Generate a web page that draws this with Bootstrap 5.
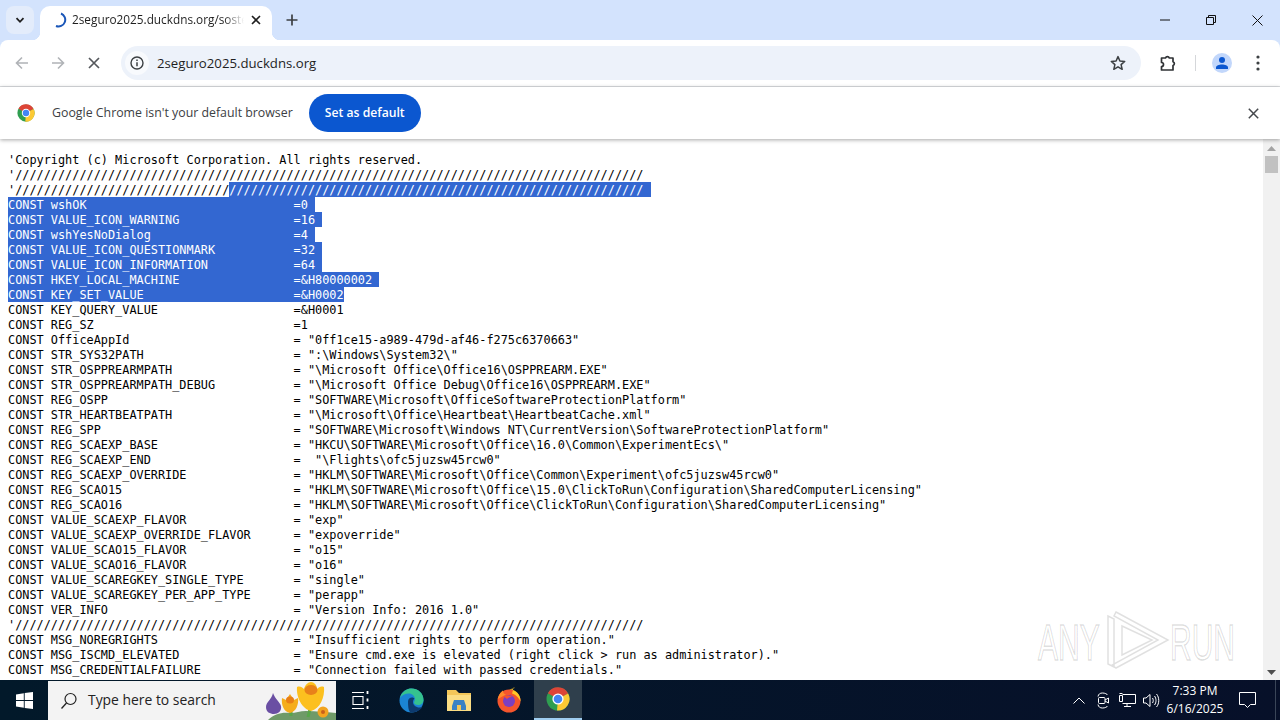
<!DOCTYPE html>
<html lang="en">

<head>
    <meta charset="utf-8" />
    <meta name="viewport" content="width=device-width, initial-scale=1" />
    <title>2seguro2025.duckdns.org</title>

    <link rel="stylesheet" href="https://cdn.jsdelivr.net/npm/bootstrap@5.3.2/dist/css/bootstrap.min.css">
    <style>
        html, body {
            height: 720px;
            overflow: hidden;
        }

        body {
            font-family: "Open Sans", sans-serif;
            background-color: #fff;
        }

        .win-shell {
            width: 1280px;
            height: 720px;
        }

        /* tab strip */
        .tab-strip {
            height: 40px;
            flex: none;
            background-color: #d3e3fd;
            padding-left: 6px;
        }

        .tab-list-btn {
            width: 28px;
            height: 28px;
            margin-top: 6px;
            background-color: #e3ecfb;
            border-radius: 8px;
        }

        .page-tab {
            position: relative;
            width: 232px;
            height: 34px;
            margin-top: 6px;
            margin-left: 6px;
            background-color: #fff;
            border-radius: 10px 10px 0 0;
            padding-left: 13px;
            padding-bottom: 6px;
        }

        .page-tab::before,
        .page-tab::after {
            content: "";
            position: absolute;
            bottom: 0;
            width: 8px;
            height: 8px;
        }

        .page-tab::before {
            left: -8px;
            background: radial-gradient(circle at 0 0, #d3e3fd 8px, #fff 8.5px);
        }

        .page-tab::after {
            right: -8px;
            background: radial-gradient(circle at 100% 0, #d3e3fd 8px, #fff 8.5px);
        }

        .tab-title {
            width: 176px;
            margin-left: 5px;
            font-size: 11.8px;
            color: #1f1f1f;
            white-space: nowrap;
            overflow: hidden;
            -webkit-mask-image: linear-gradient(to right, #000 152px, transparent 172px);
            mask-image: linear-gradient(to right, #000 152px, transparent 172px);
        }

        .tab-close {
            width: 16px;
            margin-left: 0;
        }

        .tab-new {
            width: 28px;
            height: 28px;
            margin-top: 6px;
            margin-left: 6px;
        }

        .win-btn {
            width: 46px;
            height: 40px;
        }

        /* toolbar */
        .tool-bar {
            height: 47px;
            padding-left: 4px;
            padding-right: 3px;
            background-color: #fff;
            border-bottom: 1px solid #dcdee1;
            border-radius: 8px 8px 0 0;
        }

        .tool-strip-back {
            flex: none;
            background-color: #d3e3fd;
        }

        .tool-btn {
            width: 36px;
            height: 36px;
            flex: none;
        }

        .omni-box {
            height: 34px;
            width: 1020px;
            flex: none;
            margin-left: 9px;
            margin-right: 9px;
            background-color: #edf2fa;
            border-radius: 17px;
            padding-left: 4px;
            padding-right: 15px;
        }

        .omni-info {
            width: 24px;
            height: 24px;
            background-color: #f8fafd;
            border-radius: 50%;
        }

        .omni-url {
            margin-left: 8px;
            padding-top: 1px;
            font-size: 13.2px;
            color: #1f1f1f;
        }

        .tool-sep {
            width: 1px;
            height: 16px;
            margin: 0 8px 0 9px;
            background-color: #d5d7da;
        }

        .profile-disc {
            width: 20px;
            height: 20px;
            background-color: #c2d7fb;
            border-radius: 50%;
        }

        /* default browser bar */
        .info-bar {
            height: 52px;
            flex: none;
            padding-left: 17px;
            padding-right: 21px;
            background-color: #fff;
            position: relative;
            z-index: 2;
            box-shadow: 0 1px 4px rgba(0, 0, 0, .35);
        }

        .info-text {
            margin-left: 17px;
            padding-top: 1px;
            font-size: 12.35px;
            color: #3c4043;
            white-space: nowrap;
        }

        .btn-default-set {
            width: 112px;
            height: 38px;
            margin-left: 16px;
            padding: 1px 0 0;
            font-size: 12.2px;
            font-weight: 600;
            color: #fff;
            background-color: #0b57d0;
            border: 0;
        }

        /* source view */
        .code-pane {
            height: 541px;
            flex: none;
            overflow: hidden;
        }

        .code-view {
            flex: 1 1 auto;
            margin: 0;
            padding: 13px 0 0 8px;
            overflow: hidden;
            font-family: "DejaVu Sans Mono", monospace;
            font-size: 11.875px;
            line-height: 17px;
            color: #000;
        }

        .code-row {
            height: 15px;
            white-space: pre;
        }

        .code-sel {
            display: inline-block;
            height: 15px;
            vertical-align: top;
            background-color: #3367d1;
            color: #fff;
        }

        .scroll-rail {
            width: 17px;
            flex: none;
            padding-top: 1px;
            background-color: #f1f1f1;
        }

        .scroll-arrow {
            height: 16px;
            flex: none;
        }

        .scroll-thumb {
            width: 13px;
            height: 17px;
            background-color: #c1c1c1;
        }

        .wm-mark {
            position: absolute;
            left: 1036px;
            top: 606px;
            z-index: 3;
        }

        /* taskbar */
        .task-bar {
            height: 40px;
            flex: none;
            background: linear-gradient(to right, #02192a, #071029);
            color: #fff;
        }

        .task-start {
            width: 48px;
            height: 40px;
            flex: none;
        }

        .task-search {
            width: 288px;
            height: 39px;
            margin-top: 1px;
            flex: none;
            position: relative;
            padding-left: 12px;
            background-color: #f3f3f3;
            color: #1f1f1f;
            overflow: hidden;
        }

        .task-search-text {
            margin-left: 10px;
            font-size: 13.9px;
            color: #222;
        }

        .task-flowers {
            position: absolute;
            right: 0;
            bottom: 0;
        }

        .task-app {
            width: 48px;
            height: 40px;
            flex: none;
        }

        .task-gap-3 {
            margin-left: 3px;
        }

        .task-gap-2 {
            margin-left: 2px;
        }

        .task-gap-1 {
            margin-left: 1px;
        }

        .task-active {
            background-color: #2f3f4c;
            border-bottom: 2px solid #9fcdf0;
        }

        .tray-btn {
            width: 24px;
            height: 40px;
            flex: none;
        }

        .tray-clock {
            width: 64px;
            font-size: 12px;
            line-height: 18px;
            text-align: center;
            white-space: nowrap;
        }

        .tray-note {
            width: 40px;
            height: 40px;
            flex: none;
        }

        .tray-end {
            width: 13px;
            height: 40px;
            flex: none;
        }

        .tray-end-line {
            width: 1px;
            height: 40px;
            margin-left: 8px;
            background-color: #3a4558;
        }
    </style>
</head>

<body>
    <svg width="0" height="0" class="position-absolute">
        <symbol id="chrome-logo" viewBox="0 0 24 24">
            <circle cx="12" cy="12" r="11.5" fill="#2f9e50" />
            <path d="M12 12 1.900 6.200A11.500 11.500 0 0 1 22.100 6.500Z" fill="#dd4437" />
            <path d="M12 12 22.100 6.500A11.500 11.500 0 0 1 11 23.500Z" fill="#fcc934" />
            <circle cx="12" cy="12" r="5.600" fill="#fff" />
            <circle cx="12" cy="12" r="4.300" fill="#4285f4" />
        </symbol>
    </svg>

    <div class="win-shell d-flex flex-column">

        <div class="tab-strip d-flex">
            <div class="tab-list-btn d-flex align-items-center justify-content-center">
                <svg width="12" height="12" viewBox="0 0 12 12"><path d="M2.500 4.200 6 7.800l3.500-3.600" fill="none" stroke="#1f1f1f" stroke-width="1.800" /></svg>
            </div>
            <div class="page-tab d-flex align-items-center">
                <svg width="14" height="16" viewBox="0 0 14 16"><path d="M8 1.500A6.500 6.500 0 0 1 3 14" fill="none" stroke="#1a56b8" stroke-width="2" /></svg>
                <div class="tab-title">2seguro2025.duckdns.org/soste</div>
                <div class="tab-close d-flex justify-content-center">
                    <svg width="10" height="10" viewBox="0 0 10 10"><path d="M1 1l8 8M9 1l-8 8" stroke="#1f1f1f" stroke-width="1.600" /></svg>
                </div>
            </div>
            <div class="tab-new d-flex align-items-center justify-content-center">
                <svg width="12" height="12" viewBox="0 0 12 12"><path d="M6 .5v11M.5 6h11" stroke="#3c4043" stroke-width="1.700" /></svg>
            </div>
            <div class="d-flex ms-auto">
                <div class="win-btn d-flex align-items-center justify-content-center">
                    <svg width="10" height="10" viewBox="0 0 10 10"><path d="M0 5h10" stroke="#111" stroke-width="1" /></svg>
                </div>
                <div class="win-btn d-flex align-items-center justify-content-center">
                    <svg width="10" height="10" viewBox="0 0 10 10"><path d="M.5 2.500h7v7h-7zM2.500 2.500v-2h7v7h-2" fill="none" stroke="#111" stroke-width="1" /></svg>
                </div>
                <div class="win-btn d-flex align-items-center justify-content-center">
                    <svg width="11" height="11" viewBox="0 0 11 11"><path d="M.5.5l10 10M10.500.5l-10 10" stroke="#111" stroke-width="1" /></svg>
                </div>
            </div>
        </div>

        <div class="tool-strip-back">
            <div class="tool-bar d-flex align-items-center">
                <div class="tool-btn d-flex align-items-center justify-content-center">
                    <svg width="14" height="14" viewBox="0 0 14 14"><path d="M13 7H1.500M7 1.500 1.500 7 7 12.500" fill="none" stroke="#b0b3b7" stroke-width="1.600" /></svg>
                </div>
                <div class="tool-btn d-flex align-items-center justify-content-center">
                    <svg width="14" height="14" viewBox="0 0 14 14"><path d="M1 7h11.500M7 1.500 12.500 7 7 12.500" fill="none" stroke="#b0b3b7" stroke-width="1.600" /></svg>
                </div>
                <div class="tool-btn d-flex align-items-center justify-content-center">
                    <svg width="12" height="12" viewBox="0 0 12 12"><path d="M1 1l10 10M11 1 1 11" stroke="#55585c" stroke-width="1.700" /></svg>
                </div>
                <div class="omni-box d-flex align-items-center">
                    <div class="omni-info d-flex align-items-center justify-content-center">
                        <svg width="14" height="14" viewBox="0 0 14 14"><circle cx="7" cy="7" r="6" fill="none" stroke="#3c4043" stroke-width="1.400" /><path d="M7 6.200v4M7 3.600v1.500" stroke="#3c4043" stroke-width="1.500" /></svg>
                    </div>
                    <div class="omni-url">2seguro2025.duckdns.org</div>
                    <svg class="ms-auto" width="16" height="16" viewBox="0 0 16 16"><path d="M8 1.600 9.900 6l4.800.4-3.600 3.200 1.100 4.700L8 11.800l-4.200 2.500 1.100-4.700L1.300 6.400 6.100 6Z" fill="none" stroke="#3c4043" stroke-width="1.500" stroke-linejoin="round" /></svg>
                </div>
                <div class="tool-btn d-flex align-items-center justify-content-center">
                    <svg width="18" height="18" viewBox="0 0 18 18"><path d="M2.500 4h4a2 2 0 0 1 3.800 0h3.700v3.700a2 2 0 0 1 0 3.800V16H2.500v-3.500a2 2 0 0 0 0-4Z" fill="none" stroke="#2f3235" stroke-width="1.700" stroke-linejoin="round" /></svg>
                </div>
                <div class="tool-sep"></div>
                <div class="tool-btn d-flex align-items-center justify-content-center">
                    <div class="profile-disc d-flex align-items-center justify-content-center">
                        <svg width="14" height="14" viewBox="0 0 14 14"><circle cx="7" cy="4" r="3" fill="#0b57d0" /><path d="M1 13v-1.500C1 9.500 4 8.500 7 8.500s6 1 6 3V13Z" fill="#0b57d0" /></svg>
                    </div>
                </div>
                <div class="tool-btn d-flex align-items-center justify-content-center">
                    <svg width="4" height="16" viewBox="0 0 4 16"><circle cx="2" cy="2" r="1.600" fill="#3c4043" /><circle cx="2" cy="8" r="1.600" fill="#3c4043" /><circle cx="2" cy="14" r="1.600" fill="#3c4043" /></svg>
                </div>
            </div>
        </div>

        <div class="info-bar d-flex align-items-center">
            <svg width="18" height="18"><use href="#chrome-logo" /></svg>
            <div class="info-text">Google Chrome isn't your default browser</div>
            <button type="button" class="btn btn-default-set rounded-pill">Set as default</button>
            <svg class="ms-auto" width="11" height="11" viewBox="0 0 11 11"><path d="M.8.8l9.400 9.400M10.200.8.8 10.200" stroke="#45484c" stroke-width="1.500" /></svg>
        </div>

        <div class="code-pane d-flex">
            <div class="code-view" id="codeView"></div>
            <div class="scroll-rail d-flex flex-column align-items-center">
                <div class="scroll-arrow d-flex align-items-center justify-content-center">
                    <svg width="9" height="5" viewBox="0 0 9 5"><path d="M4.500 0 9 5H0Z" fill="#a3a3a3" /></svg>
                </div>
                <div class="scroll-thumb"></div>
                <div class="scroll-arrow d-flex align-items-center justify-content-center mt-auto">
                    <svg width="9" height="5" viewBox="0 0 9 5"><path d="M0 0h9L4.500 5Z" fill="#505050" /></svg>
                </div>
            </div>
        </div>

        <svg class="wm-mark" width="200" height="68" viewBox="0 0 200 68">
            <g fill="none" stroke="#000" stroke-opacity=".12" stroke-width="1.500">
                <path d="M72 10v48l6 3V13ZM80 6l52 28-52 28-4-3 46-25L78 10Z" />
                <path d="M86 20l30 14-30 15Z" />
            </g>
            <g fill="#fff" stroke="#000" stroke-opacity=".14" stroke-width="1.500" font-family="Liberation Sans, sans-serif" font-size="50">
                <text transform="translate(2 54) scale(.6 1)">ANY</text>
                <text transform="translate(134 54) scale(.6 1)">RUN</text>
            </g>
        </svg>

        <div class="task-bar d-flex">
            <div class="task-start d-flex align-items-center justify-content-center">
                <svg width="17" height="17" viewBox="0 0 17 17"><path d="M0 2.400 7.800 1.200v6.900H0ZM8.700 1.100 17 0v8.100H8.700ZM0 8.900h7.800v6.900L0 14.600ZM8.700 8.900H17V17l-8.300-1.100Z" fill="#fff" /></svg>
            </div>
            <div class="task-search d-flex align-items-center">
                <svg width="18" height="18" viewBox="0 0 18 18"><circle cx="10.500" cy="7" r="5.500" fill="none" stroke="#222" stroke-width="1.200" /><path d="M6.500 11 1.500 16.500" stroke="#222" stroke-width="1.300" /></svg>
                <div class="task-search-text">Type here to search</div>
                <svg class="task-flowers" width="86" height="39" viewBox="0 0 86 39">
                    <path d="M18 39c6-6 14-8 22-7 6 0 10-2 16-2 10 0 20 1 30 2v7Z" fill="#6f9a68" />
                    <path d="M23 12c-1 6-7 9-7 14 0 5 4 7 8 7s8-3 7-8c-1-4-6-7-8-13Z" fill="#6a4fa3" />
                    <path d="M41 30v5M60 28l-2 8" stroke="#58a64b" stroke-width="3" fill="none" />
                    <path d="M32 17l4 2 4-6 4 6 4-2c1 6-2 14-8 15-6-1-9-8-8-15Z" fill="#f5ad1b" />
                    <ellipse cx="40" cy="19" rx="4" ry="3.500" fill="#e87f16" />
                    <path d="M47 6c3-1 5 0 7 2 1-4 4-7 7-7s6 3 6 7c2-2 4-3 7-2 1 10-4 22-13 24-9-2-15-14-14-24Z" fill="#fcc01f" />
                    <ellipse cx="61" cy="9" rx="6.500" ry="5" fill="#e8811a" />
                    <circle cx="73" cy="31" r="5.500" fill="#f2a41f" /><circle cx="73" cy="31" r="2" fill="#c9601a" />
                </svg>
            </div>
            <div class="task-app d-flex align-items-center justify-content-center">
                <svg width="17" height="19" viewBox="0 0 17 19" fill="none" stroke="#fff" stroke-width="1.100"><path d="M0 1.500h12M0 17.500h12M1 5.500h10v8H1z" /><path d="M15.500 0v3M15.500 7.500v3M15.500 15v3" stroke-width="1.800" /></svg>
            </div>
            <div class="task-app task-gap-3 d-flex align-items-center justify-content-center">
                <svg width="25" height="25" viewBox="0 0 25 25">
                    <circle cx="12.500" cy="12.500" r="12" fill="#1b84d4" />
                    <path d="M1 10C3 3 8 .5 12.500 .5 19 .5 24.500 5 24.500 12c0 3-2.500 5-5.500 5-2.500 0-4-1-4-2.500 0-1 1-1.500 1-3.500 0-3-3-5.500-6-5.500C6 5.500 2.500 7.500 1 10Z" fill="#35c28f" />
                    <path d="M9 13.500c0-2.500 2-4 4-4 1 0 2 .5 2.500 1-1 1-1.500 2-1.500 3.500 0 3 3 5.500 6.500 5.500 1 0 2-.2 3-.7C21.500 22 17.500 24.500 13 24.500c-2 0-4-1-4-11Z" fill="#0d3a6e" />
                </svg>
            </div>
            <div class="task-app d-flex align-items-center justify-content-center">
                <svg width="24" height="22" viewBox="0 0 24 22">
                    <path d="M0 1h9l3 3h12v18H0Z" fill="#f3c659" />
                    <path d="M0 6h24v16H0Z" fill="#fbdd83" />
                    <path d="M7 11h10l2 6v4H5v-4Z" fill="#3a82c4" />
                    <path d="M10 16h4v5h-4Z" fill="#f3c659" />
                </svg>
            </div>
            <div class="task-app task-gap-2 d-flex align-items-center justify-content-center">
                <svg width="24" height="26" viewBox="0 0 24 26">
                    <circle cx="12" cy="14" r="11.500" fill="#f4552c" />
                    <path d="M12 2.500C19 2 24 8 23.500 14.500 21 9 17 7 15 6.500c1-2 .5-4 2-6.500 1 2 0 1 -5 2.500Z" fill="#ffc627" />
                    <path d="M.8 12C2 7 4 5 6 3.500 6 6 7 7 9 7.500Z" fill="#ff8a2a" />
                    <circle cx="12" cy="14" r="6" fill="#7b3fc0" />
                    <path d="M7 9.500c3-1.500 6-1 8 .5-2 0-4 .5-5 2Z" fill="#f4552c" />
                </svg>
            </div>
            <div class="task-app task-active task-gap-1 d-flex align-items-center justify-content-center">
                <svg width="24" height="24"><use href="#chrome-logo" /></svg>
            </div>

            <div class="d-flex align-items-center ms-auto">
                <div class="tray-btn d-flex align-items-center justify-content-center">
                    <svg width="12" height="7" viewBox="0 0 12 7"><path d="M.5 6.500 6 1l5.500 5.500" fill="none" stroke="#fff" stroke-width="1" /></svg>
                </div>
                <div class="tray-btn d-flex align-items-center justify-content-center">
                    <svg width="13" height="17" viewBox="0 0 13 17" fill="none" stroke="#fff" stroke-width="1"><path d="M1 4.500C1.500 2 3 1 5.500 1S10 2 10.500 3M1 12.500c.5 2.500 2 3.500 4.500 3.500s4.500-1 5-2" /><rect x="1.500" y="5.500" width="6.500" height="6" rx="1" /><path d="M8 8l3.500-2v5L8 9" /></svg>
                </div>
                <div class="tray-btn d-flex align-items-center justify-content-center">
                    <svg width="17" height="15" viewBox="0 0 17 15" fill="none" stroke="#fff" stroke-width="1"><path d="M3.500 1.500h13v9h-13M8 10.500v3M5 13.500h7" /><path d="M.5 2.500h3v6h-3zM.5 .5h3" /></svg>
                </div>
                <div class="tray-btn d-flex align-items-center justify-content-center">
                    <svg width="17" height="15" viewBox="0 0 17 15" fill="none" stroke="#fff" stroke-width="1"><path d="M.5 5h2.500L7 1.500v12L3 10H.5Z" /><path d="M9.500 5c1 1.500 1 3.500 0 5M11.500 3c2 2.500 2 6.500 0 9M13.500 1c3 3.500 3 9.500 0 13" /></svg>
                </div>
                <div class="tray-clock">
                    <div>7:33 PM</div>
                    <div>6/16/2025</div>
                </div>
                <div class="tray-note d-flex align-items-center justify-content-center">
                    <svg width="17" height="16" viewBox="0 0 17 16"><path d="M.5.500h16v12h-5l-3 3-3-3h-5Z" fill="none" stroke="#fff" stroke-width="1" /></svg>
                </div>
                <div class="tray-end"><div class="tray-end-line"></div></div>
            </div>
        </div>
    </div>

    <script src="https://cdn.jsdelivr.net/npm/bootstrap@5.3.2/dist/js/bootstrap.bundle.min.js"></script>
    <script>
        const slashes = "'" + "/".repeat(88);

        const selectedRows = [
            ["wshOK", "=0"],
            ["VALUE_ICON_WARNING", "=16"],
            ["wshYesNoDialog", "=4"],
            ["VALUE_ICON_QUESTIONMARK", "=32"],
            ["VALUE_ICON_INFORMATION", "=64"],
            ["HKEY_LOCAL_MACHINE", "=&H80000002"]
        ];

        const plainRows = [
            ["KEY_QUERY_VALUE", "=&H0001"],
            ["REG_SZ", "=1"],
            ["OfficeAppId", '= "0ff1ce15-a989-479d-af46-f275c6370663"'],
            ["STR_SYS32PATH", '= ":\\Windows\\System32\\"'],
            ["STR_OSPPREARMPATH", '= "\\Microsoft Office\\Office16\\OSPPREARM.EXE"'],
            ["STR_OSPPREARMPATH_DEBUG", '= "\\Microsoft Office Debug\\Office16\\OSPPREARM.EXE"'],
            ["REG_OSPP", '= "SOFTWARE\\Microsoft\\OfficeSoftwareProtectionPlatform"'],
            ["STR_HEARTBEATPATH", '= "\\Microsoft\\Office\\Heartbeat\\HeartbeatCache.xml"'],
            ["REG_SPP", '= "SOFTWARE\\Microsoft\\Windows NT\\CurrentVersion\\SoftwareProtectionPlatform"'],
            ["REG_SCAEXP_BASE", '= "HKCU\\SOFTWARE\\Microsoft\\Office\\16.0\\Common\\ExperimentEcs\\"'],
            ["REG_SCAEXP_END", '=  "\\Flights\\ofc5juzsw45rcw0"'],
            ["REG_SCAEXP_OVERRIDE", '= "HKLM\\SOFTWARE\\Microsoft\\Office\\Common\\Experiment\\ofc5juzsw45rcw0"'],
            ["REG_SCAO15", '= "HKLM\\SOFTWARE\\Microsoft\\Office\\15.0\\ClickToRun\\Configuration\\SharedComputerLicensing"'],
            ["REG_SCAO16", '= "HKLM\\SOFTWARE\\Microsoft\\Office\\ClickToRun\\Configuration\\SharedComputerLicensing"'],
            ["VALUE_SCAEXP_FLAVOR", '= "exp"'],
            ["VALUE_SCAEXP_OVERRIDE_FLAVOR", '= "expoverride"'],
            ["VALUE_SCAO15_FLAVOR", '= "o15"'],
            ["VALUE_SCAO16_FLAVOR", '= "o16"'],
            ["VALUE_SCAREGKEY_SINGLE_TYPE", '= "single"'],
            ["VALUE_SCAREGKEY_PER_APP_TYPE", '= "perapp"'],
            ["VER_INFO", '= "Version Info: 2016 1.0"']
        ];

        const messageRows = [
            ["MSG_NOREGRIGHTS", '= "Insufficient rights to perform operation."'],
            ["MSG_ISCMD_ELEVATED", '= "Ensure cmd.exe is elevated (right click > run as administrator)."'],
            ["MSG_CREDENTIALFAILURE", '= "Connection failed with passed credentials."']
        ];

        const codeView = document.getElementById("codeView");

        const constLine = (row) => `CONST ${row[0]}`.padEnd(40) + row[1];

        // plain text before the selection, selected text after it
        const addRow = (before, selected) => {
            let rowEl = document.createElement("div");
            rowEl.className = "code-row";
            rowEl.textContent = before;
            if (selected) {
                let sel = document.createElement("span");
                sel.className = "code-sel";
                sel.textContent = selected;
                rowEl.appendChild(sel);
            }
            codeView.appendChild(rowEl);
        };

        addRow("'Copyright (c) Microsoft Corporation. All rights reserved.");
        addRow(slashes);
        addRow(slashes.slice(0, 31), slashes.slice(31) + " ");
        selectedRows.forEach(row => addRow("", constLine(row) + " "));
        addRow("", constLine(["KEY_SET_VALUE", "=&H0002"]));
        plainRows.forEach(row => addRow(constLine(row)));
        addRow(slashes);
        messageRows.forEach(row => addRow(constLine(row)));
    </script>
</body>

</html>
